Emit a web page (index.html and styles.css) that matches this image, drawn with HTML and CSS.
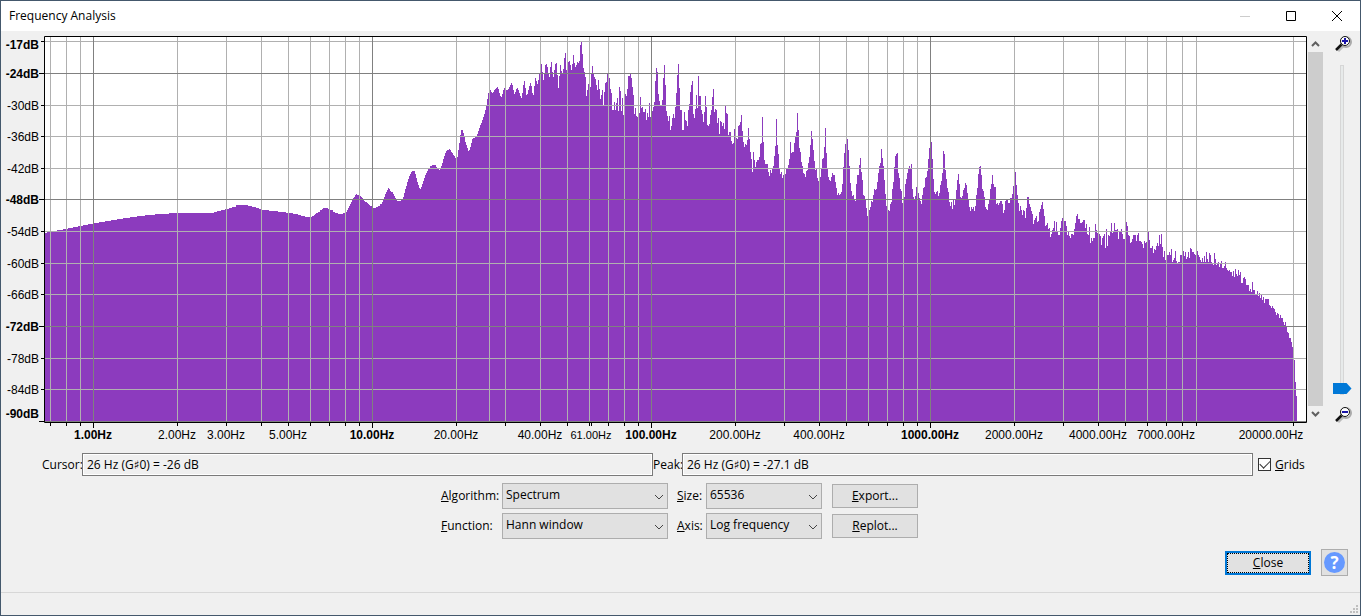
FILE: index.html
```html
<!DOCTYPE html>
<html lang="en">
<head>
<meta charset="utf-8">
<title>Frequency Analysis</title>
<link rel="stylesheet" href="styles.css">
</head>
<body>
<div class="window">
  <header class="titlebar">
    <h1 class="title">Frequency Analysis</h1>
    <button class="caption" aria-label="Minimize" disabled><svg width="12" height="12"><path d="M1 6.5H11" stroke="#ccc"/></svg></button>
    <button class="caption" aria-label="Maximize"><svg width="12" height="12"><path d="M1.5 1.5H10.5V10.5H1.5Z" stroke="#000" fill="none"/></svg></button>
    <button class="caption" aria-label="Close window"><svg width="12" height="12"><path d="M1 1L11 11M11 1L1 11" stroke="#000" fill="none"/></svg></button>
  </header>

  <main>
    <section class="graph">
      <svg class="chart" id="chart" viewBox="1 31 1306 410" role="img" aria-label="Spectrum"></svg>
      <div class="scrollbar">
        <button class="scroll-arrow" aria-label="Scroll up"><svg width="9" height="8"><path d="M1 6L4.500 2.500L8 6" stroke="#606060" stroke-width="2" fill="none"/></svg></button>
        <div class="scroll-thumb"></div>
        <button class="scroll-arrow" aria-label="Scroll down"><svg width="9" height="8"><path d="M1 2L4.500 5.500L8 2" stroke="#606060" stroke-width="2" fill="none"/></svg></button>
      </div>
      <div class="zoom">
        <button class="zoom-button" aria-label="Zoom in">
          <svg width="17" height="17"><path d="M3 15L9 9" stroke="#bbb" stroke-width="3"/><circle cx="11" cy="6" r="5" fill="none" stroke="#aaa" stroke-width="2"/><circle cx="10" cy="5" r="4.500" fill="#fff" stroke="#111"/><path d="M1 14L6.500 8.500" stroke="#111" stroke-width="2.500"/><path d="M7 5H13M10 2V8" stroke="#1a14a8" stroke-width="2"/></svg>
        </button>
        <input class="slider" type="range" min="0" max="100" value="0" aria-label="Vertical zoom">
        <button class="zoom-button" aria-label="Zoom out">
          <svg width="17" height="17"><path d="M3 15L9 9" stroke="#bbb" stroke-width="3"/><circle cx="11" cy="6" r="5" fill="none" stroke="#aaa" stroke-width="2"/><circle cx="10" cy="5" r="4.500" fill="#fff" stroke="#111"/><path d="M1 14L6.500 8.500" stroke="#111" stroke-width="2.500"/><path d="M7 5H13" stroke="#1a14a8" stroke-width="2"/></svg>
        </button>
      </div>
    </section>

    <section class="readouts">
      <label for="cursor">Cursor:</label>
      <input class="readout" id="cursor" type="text" readonly value="26 Hz (G♯0) = -26 dB">
      <label for="peak">Peak:</label>
      <input class="readout" id="peak" type="text" readonly value="26 Hz (G♯0) = -27.1 dB">
      <label class="grids"><input class="check" type="checkbox" checked><span><u>G</u>rids</span></label>
    </section>

    <section class="options">
      <label for="algorithm"><u>A</u>lgorithm:</label>
      <div class="combo"><select id="algorithm"><option>Spectrum</option></select><svg class="chevron" width="10" height="6"><path d="M1 1L5 5L9 1"/></svg></div>
      <label class="second" for="size"><u>S</u>ize:</label>
      <div class="combo"><select id="size"><option>65536</option></select><svg class="chevron" width="10" height="6"><path d="M1 1L5 5L9 1"/></svg></div>
      <button class="button"><span><u>E</u>xport...</span></button>
      <label for="function"><u>F</u>unction:</label>
      <div class="combo"><select id="function"><option>Hann window</option></select><svg class="chevron" width="10" height="6"><path d="M1 1L5 5L9 1"/></svg></div>
      <label class="second" for="axis"><u>A</u>xis:</label>
      <div class="combo"><select id="axis"><option>Log frequency</option></select><svg class="chevron" width="10" height="6"><path d="M1 1L5 5L9 1"/></svg></div>
      <button class="button"><span><u>R</u>eplot...</span></button>
    </section>

    <section class="actions">
      <button class="button primary"><span><u>C</u>lose</span></button>
      <button class="help" aria-label="Help"><span class="help-mark">?</span></button>
    </section>
  </main>

  <footer class="statusbar">
    <svg width="8" height="8" fill="#bfbfbf"><path d="M6 0h2v2h-2zM3 3h2v2h-2zM6 3h2v2h-2zM0 6h2v2h-2zM3 6h2v2h-2zM6 6h2v2h-2z"/></svg>
  </footer>
</div>
<script src="chart.js"></script>
</body>
</html>
```
FILE: styles.css
```css
* {
  box-sizing: border-box;
}

body {
  margin: 0;
  font: 12px/16px "Open Sans", "Noto Sans", "DejaVu Sans", sans-serif;
  color: #000;
}

button, input, select {
  margin: 0;
  font: inherit;
  color: inherit;
}

.window {
  display: flex;
  flex-direction: column;
  min-height: 100vh;
  border: 1px solid #44586c;
  background: #f0f0f0;
}

.titlebar {
  display: flex;
  align-items: center;
  height: 30px;
  padding-left: 8px;
  background: #fff;
}

.title {
  flex: 1;
  margin: 0;
  font-size: 12px;
  font-weight: 400;
}

.caption {
  display: flex;
  align-items: center;
  justify-content: center;
  width: 46px;
  height: 30px;
  padding: 0;
  border: 0;
  background: none;
}

main {
  flex: 1;
}

.graph {
  display: grid;
  grid-template-columns: 1fr 16px 37px;
}

.chart {
  display: block;
  width: 100%;
  height: auto;
  font-family: "Liberation Sans", Arial, sans-serif;
  font-size: 12px;
}

.chart .minor { stroke: #b0b0b0; }
.chart .major { stroke: #808080; }
.chart .frame { stroke: #000; fill: none; }
.chart .spectrum { fill: #8c3bbe; }
.chart .strong { font-weight: 700; }
.chart .small { font-size: 11px; }

.scrollbar {
  display: flex;
  flex-direction: column;
  padding: 5px 0 19px 1px;
}

.scroll-arrow {
  display: flex;
  align-items: center;
  justify-content: center;
  height: 16px;
  padding: 0;
  border: 0;
  background: none;
}

.scroll-thumb {
  flex: 1;
  background: #cdcdcd;
}

.zoom {
  display: flex;
  flex-direction: column;
  align-items: flex-end;
  padding: 5px 8px 17px 0;
}

.zoom-button {
  width: 17px;
  height: 17px;
  padding: 0;
  border: 0;
  background: none;
}

.zoom-button svg {
  display: block;
}

.slider {
  flex: 1;
  width: 19px;
  min-height: 0;
  margin: 12px 1px 12px 0;
  writing-mode: vertical-lr;
  direction: rtl;
  appearance: none;
  background: none;
}

.slider::-webkit-slider-runnable-track {
  width: 4px;
  border: 1px solid #d6d6d6;
  background: #e7eaea;
}

.slider::-webkit-slider-thumb {
  appearance: none;
  width: 19px;
  height: 11px;
  margin-left: -8px;
  background: #0078d7;
  clip-path: polygon(0 0, 14px 0, 100% 50%, 14px 100%, 0 100%);
}

.readouts {
  display: grid;
  grid-template-columns: 40px 1fr 29px 1fr 49px;
  align-items: center;
  margin-top: 12px;
  padding: 0 58px 0 41px;
  white-space: nowrap;
}

.readout {
  width: 100%;
  height: 23px;
  padding: 0 4px;
  border: 1px solid #7a7a7a;
  background: #f0f0f0;
  box-shadow: inset 0 0 0 1px #fff;
}

.grids {
  display: flex;
  align-items: center;
  gap: 4px;
  padding-left: 5px;
}

.check {
  display: grid;
  place-items: center;
  flex: none;
  width: 13px;
  height: 13px;
  border: 1px solid #333;
  background: #fff;
  appearance: none;
}

.check:checked::before {
  content: "";
  width: 9px;
  height: 5px;
  margin-bottom: 3px;
  border: solid #333;
  border-width: 0 0 1px 1px;
  transform: rotate(-45deg);
}

.options {
  display: grid;
  grid-template-columns: 61px 166px 38px 116px 96px;
  row-gap: 4px;
  align-items: center;
  justify-content: center;
  margin-top: 7px;
  padding-right: 2px;
}

.second {
  padding-left: 9px;
}

.combo {
  position: relative;
}

.combo select {
  display: block;
  width: 100%;
  height: 26px;
  padding: 0 20px 2px 3px;
  border: 1px solid #adadad;
  border-radius: 0;
  background: #e1e1e1;
  appearance: none;
}

.chevron {
  position: absolute;
  top: 11px;
  right: 4px;
  fill: none;
  stroke: #444;
  pointer-events: none;
}

.button {
  width: 86px;
  height: 24px;
  padding: 0;
  border: 1px solid #adadad;
  background: #e1e1e1;
}

.options .button {
  justify-self: end;
}

.actions {
  display: flex;
  align-items: center;
  justify-content: flex-end;
  gap: 10px;
  margin-top: 10px;
  padding-right: 12px;
}

.primary {
  border: 2px solid #0078d7;
  outline: 1px dotted #000;
  outline-offset: -3px;
}

.help {
  display: grid;
  place-items: center;
  width: 27px;
  height: 27px;
  padding: 0;
  border: 1px solid #adadad;
  background: #e1e1e1;
}

.help-mark {
  width: 21px;
  height: 21px;
  border-radius: 50%;
  background: #6699ff;
  color: #fff;
  font-size: 17px;
  font-weight: 700;
  line-height: 21px;
}

.statusbar {
  display: flex;
  align-items: flex-end;
  justify-content: flex-end;
  height: 23px;
  padding: 2px;
  border-top: 1px solid #d7d7d7;
}
```
FILE: chart.js
```js
// Low frequencies: [start of step, top of step].
const steps = [
  [45,233],[47,232],[57,230],[63,229],[68,228],[73,227],[78,226],[83,225],[88,224],[93,223],[99,222],[105,221],
  [111,220],[117,219],[123,218],[130,217],[137,216],[145,215],[155,214],[169,213],[214,212],[217,211],[221,210],
  [225,209],[229,208],[232,207],[236,205],[248,206],[252,207],[256,208],[259,209],[262,210],[269,211],[278,212],
  [286,213],[293,214],[298,215],[301,216],[305,217],[312,216],[314,215],[315,214],[316,213],[318,212],[320,210],
  [322,209],[323,208],[328,209],[329,210],[333,212],[335,213],[338,214],[343,213],[346,212],[347,210],[348,208],
  [349,206],[350,204],[351,202],[352,200],[353,198],[354,197],[355,195],[356,194],[357,195],[360,196],[361,197],
  [362,198],[363,199],[364,201],[365,202],[367,203],[368,204],[369,205],[370,206],[372,208],[376,207],[378,206],
  [380,204],[382,202],[383,199],[384,197],[385,194],[386,192],[387,190],[388,188],[389,189],[390,191],[391,192],
  [393,194],[394,196],[395,198],[396,200],[397,201],[401,200],[403,197],[404,193],[405,189],[406,186],[407,182],
  [408,179],[409,176],[410,174],[411,172],[412,171],[415,174],[416,178],[417,182],[418,185],[419,188],[420,189],
  [421,187],[422,184],[423,181],[424,178],[425,175],[426,173],[427,171],[428,169],[430,166],[432,165],[436,167],
  [437,168],[439,170],[440,169],[441,166],[442,163],[443,159],[444,156],[445,153],[446,151],[447,150],[449,149],
  [450,150],[451,152],[452,153],[453,155],[454,156],[455,158],[457,157],[458,150],[459,143],[460,135],[461,130],
  [463,133],[464,137],[465,142],[466,145],[467,148],[468,151],[469,150],[470,147],[471,143],[472,139],[473,138],
  [475,137],[477,134],[478,131],[479,128]
];

// High frequencies: one top for each column from 480 on.
const columns = [
  125,123,120,117,114,110,105,99,93,90,
  90,92,93,92,90,89,88,87,89,93,
  96,97,94,90,88,90,90,90,89,87,
  85,83,85,90,94,92,89,88,90,93,
  96,98,93,85,81,88,95,94,90,86,
  83,86,93,95,86,78,81,84,80,73,
  73,64,72,80,73,65,64,67,74,77,
  67,62,72,77,70,64,63,75,88,76,
  65,71,73,69,58,53,70,73,62,61,
  65,70,64,55,63,67,65,62,63,61,
  45,42,54,68,72,77,96,90,84,87,
  87,74,66,73,77,79,85,90,80,89,
  99,95,90,105,92,83,82,74,76,78,
  89,93,110,110,102,110,103,98,111,87,
  91,111,98,115,105,94,96,89,76,76,
  74,78,87,95,114,108,116,117,117,113,
  97,108,107,112,112,109,120,113,117,103,
  117,113,111,107,102,81,68,72,94,101,
  105,105,100,78,65,85,111,116,121,116,
  130,126,118,114,118,107,93,75,64,88,
  110,110,130,130,112,120,121,126,110,104,
  92,85,81,114,118,109,95,108,76,96,
  96,110,114,122,112,96,107,125,126,124,
  115,110,97,89,112,109,110,123,118,134,
  121,122,126,123,129,106,113,114,135,132,
  132,141,144,143,129,137,138,139,126,125,
  122,115,131,142,147,144,145,140,128,139,
  152,159,172,152,160,167,162,160,160,157,
  144,143,117,142,160,164,164,164,172,176,
  170,173,169,166,156,146,119,145,154,169,
  174,172,178,175,174,174,168,168,165,159,
  142,153,152,152,143,137,132,113,130,148,
  152,162,166,173,174,177,171,170,163,157,
  145,131,139,150,161,170,169,178,181,178,
  177,169,159,158,147,128,153,169,177,180,
  181,177,173,175,175,182,188,195,193,195,
  194,192,184,167,153,144,144,139,150,166,
  183,191,196,195,199,201,184,175,175,165,
  158,172,180,195,196,199,208,216,213,210,
  207,201,202,195,189,190,189,182,173,166,
  163,149,158,166,180,194,206,207,210,211,
  204,202,189,182,167,156,154,153,173,178,
  189,191,203,199,197,184,179,173,169,166,
  169,164,189,197,199,196,187,190,193,198,
  201,204,195,188,187,178,177,171,159,148,
  147,142,159,179,192,194,192,191,196,193,
  185,181,173,151,154,170,179,188,192,202,
  206,202,209,200,205,199,190,180,174,184,
  197,198,196,190,188,183,185,193,199,207,
  211,207,209,207,211,206,195,188,174,167,
  166,175,189,191,197,207,209,210,204,199,
  189,184,175,184,187,187,204,203,205,203,
  201,201,204,213,210,201,200,200,203,203,
  198,198,194,186,186,172,185,195,203,211,
  206,210,215,210,211,218,208,197,197,204,
  207,211,214,224,220,218,216,222,221,212,
  209,205,202,209,216,226,225,223,229,228,
  237,234,230,228,221,231,222,231,235,235,
  228,221,218,220,221,221,226,235,231,236,
  238,234,234,235,229,223,216,214,219,219,
  223,223,222,220,220,228,224,234,235,227,
  243,238,241,238,238,224,230,233,233,234,
  236,245,238,236,234,248,229,246,235,236,
  232,223,233,232,223,230,230,229,239,232,
  232,229,234,239,239,231,222,226,235,236,
  243,242,239,235,235,235,241,235,233,241,
  241,242,244,248,241,243,242,242,232,240,
  248,248,246,253,249,250,246,243,246,235,
  244,234,247,257,251,260,257,255,255,252,
  255,249,262,260,258,251,261,263,262,262,
  255,255,253,251,256,252,259,257,252,258,
  248,249,252,252,254,255,255,251,255,257,
  260,262,258,262,256,262,252,259,262,253,
  255,262,263,265,253,259,265,264,262,267,
  263,261,268,268,266,262,268,270,271,270,
  272,272,276,271,277,269,274,276,270,275,
  272,283,283,278,277,279,285,285,285,291,
  289,292,282,290,290,294,294,291,296,293,
  298,295,300,297,303,299,299,299,299,305,
  306,308,306,308,309,312,315,313,314,318,
  315,318,318,322,325,322,327,332,333,338,
  338,342,347,350,360,382,396
];

const minorX = [50,66,80,177,226,261,288,310,329,345,359,456,489,505,540,567,589,608,624,638,735,784,819,846,868,887,903,917,1014,1063,1098,1125,1147,1166,1182,1196,1293];
const majorX = [93,372,651,930];
const minorY = [41,105,136,168,231,263,294,358,389];
const majorY = [73,199,326,421];

// [text, baseline or centre, class]
const levels = [
  ["-17dB",49,"strong"],["-24dB",78,"strong"],["-30dB",110,""],["-36dB",141,""],["-42dB",173,""],["-48dB",204,"strong"],
  ["-54dB",236,""],["-60dB",268,""],["-66dB",299,""],["-72dB",331,"strong"],["-78dB",363,""],["-84dB",394,""],["-90dB",418,"strong"]
];
const frequencies = [
  ["1.00Hz",93,"strong"],["2.00Hz",177,""],["3.00Hz",226,""],["5.00Hz",288,""],["10.00Hz",372,"strong"],["20.00Hz",456,""],
  ["40.00Hz",540,""],["61.00Hz",591,"small"],["100.00Hz",651,"strong"],["200.00Hz",735,""],["400.00Hz",819,""],
  ["1000.00Hz",930,"strong"],["2000.00Hz",1014,""],["4000.00Hz",1098,""],["7000.00Hz",1166,""],["20000.00Hz",1271,""]
];

let outline = "M45 422";
for (const [x, y] of steps) outline += `H${x}V${y}`;
columns.forEach((y, i) => { outline += `H${480 + i}V${y}`; });
outline += `H${480 + columns.length}V422Z`;

const vertical = (xs, from, to) => xs.map(x => `M${x + .5} ${from}V${to}`).join("");
const horizontal = (ys, from, to) => ys.map(y => `M${from} ${y + .5}H${to}`).join("");

document.getElementById("chart").innerHTML =
  `<rect x="44" y="36" width="1263" height="387" fill="#fff"/>` +
  `<path class="spectrum" d="${outline}"/>` +
  `<path class="minor" d="${vertical(minorX, 37, 422)}${horizontal(minorY, 45, 1306)}"/>` +
  `<path class="major" d="${vertical(majorX, 37, 422)}${horizontal(majorY, 45, 1306)}"/>` +
  `<path class="frame" d="M44.5 36.5H1306.5V422.5H44.5Z${horizontal(minorY, 41, 44)}${horizontal(majorY, 39, 44)}${vertical(minorX.filter(x => x !== 489).concat(591), 423, 426)}${vertical(majorX, 423, 428)}"/>` +
  levels.map(([t, y, c]) => `<text class="${c}" x="39" y="${y}" text-anchor="end">${t}</text>`).join("") +
  frequencies.map(([t, x, c]) => `<text class="${c}" x="${x}" y="439" text-anchor="middle">${t}</text>`).join("");
```
